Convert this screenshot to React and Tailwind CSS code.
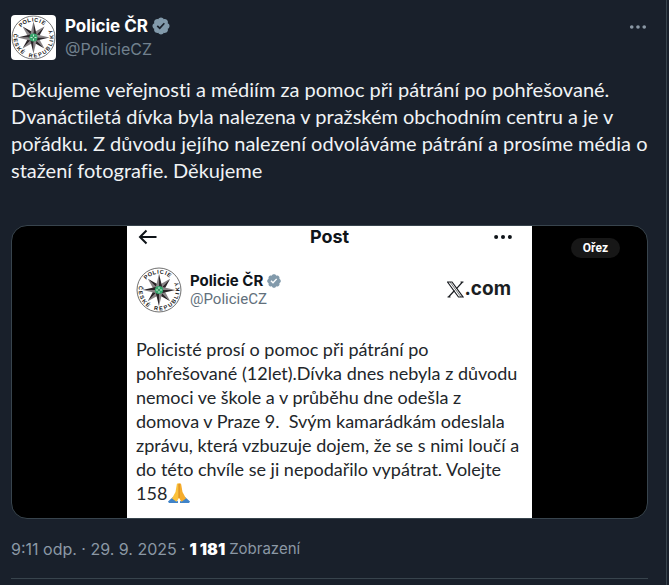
import React from "react";

const POST_LINES = [
  "Děkujeme veřejnosti a médiím za pomoc při pátrání po pohřešované.",
  "Dvanáctiletá dívka byla nalezena v pražském obchodním centru a je v",
  "pořádku. Z důvodu jejího nalezení odvoláváme pátrání a prosíme média o",
  "stažení fotografie. Děkujeme",
];

const QUOTED_LINES = [
  "Policisté prosí o pomoc při pátrání po",
  "pohřešované (12let).Dívka dnes nebyla z důvodu",
  "nemoci ve škole a v průběhu dne odešla z",
  "domova v Praze 9.\u00a0 Svým kamarádkám odeslala",
  "zprávu, která vzbuzuje dojem, že se s nimi loučí a",
  "do této chvíle se ji nepodařilo vypátrat. Volejte",
];

export default function App() {
  return (
    <div className="min-h-screen bg-[#19202b] pr-0.5 font-[Inter,sans-serif]">
      <main className="min-h-screen border-r border-[#38444d]">
        <article className="pt-[15px] pr-[18px] pl-[11px]">
          <PostHeader />

          <p className="mt-[15px] font-[Lato,sans-serif] text-[20px] leading-[27px] text-[#f0f3f5] [font-variant-ligatures:none]">
            {POST_LINES.map((line) => (
              <span key={line} className="block whitespace-nowrap">
                {line}
              </span>
            ))}
          </p>

          <MediaCard />

          <div className="mt-5 flex items-center gap-1 border-b border-[#38444d] pb-[19px] text-[16px] leading-5 text-[#8b98a5]">
            <a href="#time">9:11 odp. · 29. 9. 2025</a>
            <span>·</span>
            <b className="font-black text-white">1 181</b>
            <span className="text-[15px]">Zobrazení</span>
          </div>
        </article>
      </main>
    </div>
  );
}

/* -------------------- */
/* Post header          */
/* -------------------- */
function PostHeader() {
  return (
    <header className="flex items-start">
      <a href="#profile" aria-label="Policie ČR" className="rounded bg-white">
        <PoliceLogo className="size-[45px]" />
      </a>
      <div className="ml-[9px]">
        <div className="flex items-center gap-[3px]">
          <a href="#profile" className="text-[17px] leading-[22px] font-bold text-white">
            Policie ČR
          </a>
          <VerifiedBadge className="size-5 text-[#829aab]" />
        </div>
        <a href="#profile" className="block text-[16px] leading-6 text-[#71808e]">
          @PolicieCZ
        </a>
      </div>
      <button type="button" aria-label="Více" className="mt-[2px] ml-auto text-[#8b98a5]">
        <Dots className="size-5" />
      </button>
    </header>
  );
}

/* -------------------- */
/* Attached image       */
/* -------------------- */
function MediaCard() {
  return (
    <div className="relative mt-[41px] flex justify-center overflow-hidden rounded-2xl border border-[#38444d] bg-black">
      <div className="w-[405px] bg-white px-[9px] pb-[13px] text-[#22262a]">
        <div className="grid grid-cols-3 items-center">
          <button type="button" aria-label="Zpět" className="justify-self-start text-[#0f1419]">
            <BackArrow className="h-5 w-6" />
          </button>
          <h2 className="text-center text-[18px] leading-[22px] font-bold text-[#0f1419]">
            Post
          </h2>
          <button type="button" aria-label="Další" className="mr-2 justify-self-end text-[#0f1419]">
            <Dots className="h-[22px] w-6" />
          </button>
        </div>

        <div className="mt-[19px] flex items-center">
          <PoliceLogo className="size-[46px]" />
          <div className="ml-2">
            <div className="flex items-center gap-[3px]">
              <span className="text-[15px] leading-[19px] font-bold text-[#0f1419]">
                Policie ČR
              </span>
              <VerifiedBadge className="size-4 text-[#829aab]" />
            </div>
            <div className="font-[Roboto,sans-serif] text-[15px] leading-[19px] text-[#62707c]">
              @PolicieCZ
            </div>
          </div>
          <div className="mr-3 ml-auto flex items-center pb-0.5 text-[19px] leading-6 font-bold text-[#1b1e22]">
            <XMark className="size-[17px]" />
            .com
          </div>
        </div>

        <p className="mt-6 font-[Lato,sans-serif] text-[18px] leading-6 [font-variant-ligatures:none]">
          {QUOTED_LINES.map((line) => (
            <span key={line} className="block whitespace-nowrap">
              {line}
            </span>
          ))}
          <span className="flex items-center">
            158
            <FoldedHands className="size-6" />
          </span>
        </p>
      </div>

      <button
        type="button"
        className="absolute top-3 right-[27px] rounded-full bg-[#171717] px-3 font-[Roboto,sans-serif] text-[12px] leading-5 font-bold text-white"
      >
        Ořez
      </button>
    </div>
  );
}

/* -------------------- */
/* Icons                */
/* -------------------- */

// letters around the rim: [letter, clockwise angle from the top]
const RIM_TOP = [
  ["P", -45],
  ["O", -30],
  ["L", -15],
  ["I", -3],
  ["C", 9],
  ["I", 22],
  ["E", 34],
];

const RIM_BOTTOM = [
  ["Č", 276],
  ["E", 261],
  ["S", 247],
  ["K", 232],
  ["É", 217],
  ["R", 189],
  ["E", 174],
  ["P", 159],
  ["U", 143],
  ["B", 127],
  ["L", 112],
  ["I", 101],
  ["K", 88],
  ["Y", 72],
];

function PoliceLogo({ className }) {
  const rays = [0, 90, 180, 270];

  return (
    <svg viewBox="0 0 90 90" className={className} aria-hidden="true">
      <circle cx="45" cy="45" r="43" fill="#fff" stroke="#444" strokeWidth="1.5" />
      <g
        fill="#222"
        fontFamily="Liberation Sans, sans-serif"
        fontWeight="bold"
        fontSize="11"
        textAnchor="middle"
      >
        {RIM_TOP.map(([letter, angle]) => (
          <text key={angle} x="45" y="13" transform={`rotate(${angle} 45 45)`}>
            {letter}
          </text>
        ))}
        {RIM_BOTTOM.map(([letter, angle]) => (
          <text key={angle} x="45" y="85" transform={`rotate(${angle - 180} 45 45)`}>
            {letter}
          </text>
        ))}
      </g>
      {rays.map((angle) => (
        <g key={`d${angle}`} transform={`rotate(${angle + 45} 45 45)`}>
          <path d="M45 14 38 38 45 45z" fill="#8a8587" />
          <path d="M45 14 52 38 45 45z" fill="#2b2528" />
        </g>
      ))}
      {rays.map((angle) => (
        <g key={`s${angle}`} transform={`rotate(${angle} 45 45)`}>
          <path d="M45 13 39 38 45 45z" fill="#8a8587" />
          <path d="M45 13 51 38 45 45z" fill="#2b2528" />
        </g>
      ))}
      <circle cx="45" cy="45" r="8" fill="#36a66c" />
      <path d="M45 39v12M39 45h12" stroke="#bfe8d0" strokeWidth="2" />
      <circle cx="45" cy="45" r="2" fill="#1c7f4b" />
    </svg>
  );
}

function VerifiedBadge({ className }) {
  return (
    <svg viewBox="0 0 22 22" className={className} fill="currentColor" aria-label="Ověřený účet">
      <path d="M20.396 11c-.018-.646-.215-1.275-.57-1.816-.354-.54-.852-.972-1.438-1.246.223-.607.27-1.264.14-1.897-.131-.634-.437-1.218-.882-1.687-.47-.445-1.053-.75-1.687-.882-.633-.13-1.29-.083-1.897.14-.273-.587-.704-1.086-1.245-1.44S11.647 1.62 11 1.604c-.646.017-1.273.213-1.813.568s-.969.854-1.24 1.44c-.608-.223-1.267-.272-1.902-.14-.635.13-1.22.436-1.69.882-.445.47-.749 1.055-.878 1.688-.13.633-.08 1.29.144 1.896-.587.274-1.087.705-1.443 1.245-.356.54-.555 1.17-.574 1.817.02.647.218 1.276.574 1.817.356.54.856.972 1.443 1.245-.224.606-.274 1.263-.144 1.896.13.634.433 1.218.877 1.688.47.443 1.054.747 1.687.878.633.132 1.29.084 1.897-.136.274.586.705 1.084 1.246 1.439.54.354 1.17.551 1.816.569.647-.016 1.276-.213 1.817-.567s.972-.854 1.245-1.44c.604.239 1.266.296 1.903.164.636-.132 1.22-.447 1.68-.907.46-.46.776-1.044.908-1.681s.075-1.299-.165-1.903c.586-.274 1.084-.705 1.439-1.246.354-.54.551-1.17.569-1.816zM9.662 14.85l-3.429-3.428 1.293-1.302 2.072 2.072 4.4-4.794 1.347 1.246z" />
    </svg>
  );
}

function Dots({ className }) {
  return (
    <svg viewBox="0 0 24 24" className={className} fill="currentColor" aria-hidden="true">
      <circle cx="4.5" cy="12" r="2.2" />
      <circle cx="12" cy="12" r="2.2" />
      <circle cx="19.5" cy="12" r="2.2" />
    </svg>
  );
}

function BackArrow({ className }) {
  return (
    <svg
      viewBox="0 0 24 20"
      className={className}
      fill="none"
      stroke="currentColor"
      strokeWidth="2"
      aria-hidden="true"
    >
      <path d="M20.500 10H4M10.500 3.500 4 10l6.500 6.500" />
    </svg>
  );
}

function XMark({ className }) {
  return (
    <svg
      viewBox="0 0 17 17"
      className={className}
      fill="none"
      stroke="currentColor"
      aria-label="X"
    >
      <path d="M.5 1H5l11 15h-4.500z" strokeWidth="1.200" />
      <path d="M3 1l11 15" strokeWidth="0.600" />
      <path d="M15.500 1 9.500 7.700M7.500 9.500 1.500 16M13.500 1h3M.5 16h3" strokeWidth="1.200" />
    </svg>
  );
}

function FoldedHands({ className }) {
  return (
    <svg viewBox="0 0 24 24" className={className} aria-label="sepjaté ruce">
      <path d="M1 20.500 6 16l5 4.500V22H2z" fill="#3f83c8" />
      <path d="M23 20.500 18 16l-5 4.500V22h9z" fill="#3f83c8" />
      <path d="M12 2.500c-1.400-.6-2.200.2-2.300 1.500L8.500 11 5 17.500l4.500 3.300L12 17z" fill="#fbc13a" />
      <path d="M12 2.500c1.400-.6 2.200.2 2.300 1.500l1.200 7 3.500 6.500-4.500 3.300L12 17z" fill="#f5ac2c" />
      <path d="M12 3v14" stroke="#c9791a" strokeWidth="0.800" />
    </svg>
  );
}
